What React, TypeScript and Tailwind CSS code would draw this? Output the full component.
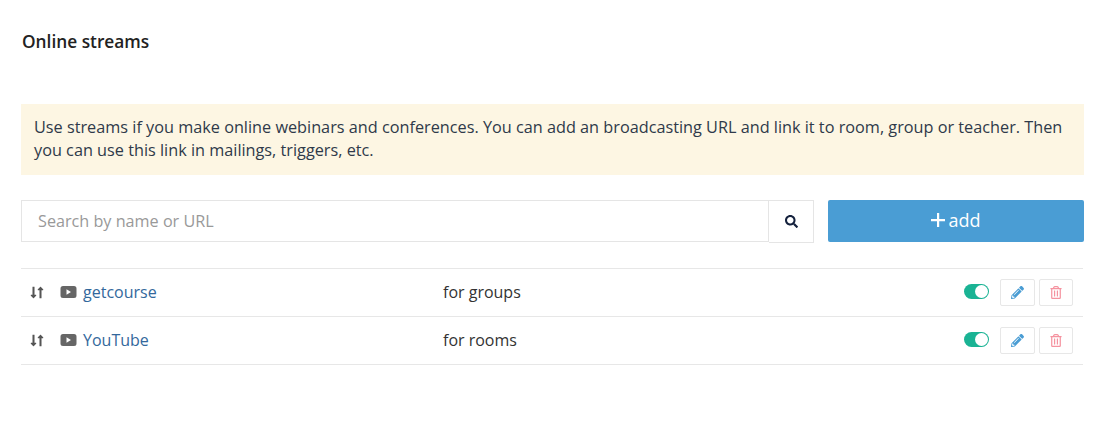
import React from 'react';
import { FaSearch, FaPencilAlt, FaRegTrashAlt, FaLongArrowAltDown, FaLongArrowAltUp } from 'react-icons/fa';

interface Stream {
    name: string;
    target: string;
}

const streams: Stream[] = [
    { name: 'getcourse', target: 'for groups' },
    { name: 'YouTube', target: 'for rooms' },
];

// Rounded box with a play triangle cut out
const PlayBox = () => (
    <svg width="17" height="14" viewBox="0 0 17 14" className="mb-[1px] shrink-0">
        <path fillRule="evenodd" fill="#666" d="M3 1h11a2.5 2.5 0 0 1 2.5 2.5v7A2.5 2.5 0 0 1 14 13H3a2.5 2.5 0 0 1-2.5-2.5v-7A2.5 2.5 0 0 1 3 1zM6.5 4.2v5.6L11 7z" />
    </svg>
);

// Row of the streams table
const StreamRow = ({ name, target }: Stream) => (
    <div className="flex h-12 items-center border-b border-[#e7e7e7] pl-[9px] pr-[10px]">
        <span className="flex w-[30px] text-[#555]">
            <FaLongArrowAltDown className="h-[13px] w-[7px]" />
            <FaLongArrowAltUp className="h-[13px] w-[7px]" />
        </span>
        <PlayBox />
        <a className="mb-[2px] ml-[6px] w-[360px] text-[#33689c]">{name}</a>
        <span className="mb-[2px] flex-1 text-[#333]">{target}</span>
        <span className="relative mb-[3px] mr-[11px] h-[15px] w-[25px] rounded-full bg-[#1ab394]">
            <span className="absolute right-[1px] top-[1px] h-[13px] w-[13px] rounded-full bg-white" />
        </span>
        <button className="flex h-[27px] w-[35px] items-center justify-center rounded-[2px] border border-[#e7e7e7] text-[#4a9dd4]">
            <FaPencilAlt className="h-[13px] w-[13px]" />
        </button>
        <button className="ml-[4px] flex h-[27px] w-[34px] items-center justify-center rounded-[2px] border border-[#e7e7e7] text-[#f5929f]">
            <FaRegTrashAlt className="h-[13px] w-[12px]" />
        </button>
    </div>
);

export default function App() {
    return (
        <div className="h-[431px] bg-white pl-[21px] pr-[36px] pt-[30px] font-['Open_Sans',sans-serif] text-[16px] text-[#333]">
            <h1 className="ml-[1px] text-[17.3px] font-semibold leading-[24px] text-[#222]">Online streams</h1>

            <div className="mt-[50px] bg-[#fdf6e3] px-[13px] pb-[13px] pt-[12px] text-[16.26px] leading-[23px] text-[#2f3a4a]">
                Use streams if you make online webinars and conferences. You can add an broadcasting URL and link it to room, group or teacher. Then you can use this link in mailings, triggers, etc.
            </div>

            <div className="mt-[25px] flex">
                <input
                    className="h-[42px] w-[748px] border border-[#e5e5e5] px-[16px] text-[16.2px] outline-none placeholder:text-[#999]"
                    placeholder="Search by name or URL"
                />
                <button className="flex h-[43px] w-[45px] items-center justify-center border border-l-0 border-[#e5e5e5] text-[#14213d]">
                    <FaSearch className="h-[13px] w-[13px]" />
                </button>
                <button className="ml-[14px] flex h-[42px] flex-1 items-center justify-center gap-[3px] rounded-[2px] bg-[#4a9dd4] pb-[2px] text-[18px] text-white">
                    <svg width="14" height="14" viewBox="0 0 14 14">
                        <path fill="#fff" d="M6 0h2.2v6H14v2.2H8.2V14H6V8.2H0V6h6z" />
                    </svg>
                    add
                </button>
            </div>

            <div className="mr-[1px] mt-[25px] border-t border-[#e7e7e7]">
                {streams.map((s) => (
                    <StreamRow key={s.name} {...s} />
                ))}
            </div>
        </div>
    );
}
